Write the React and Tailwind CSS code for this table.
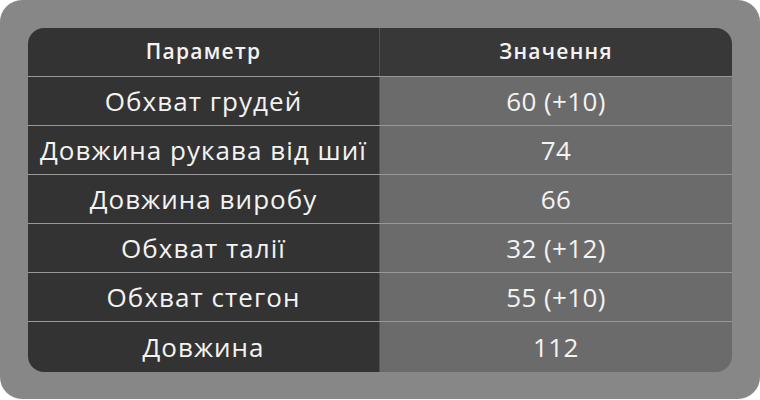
import React from "react";

const rows = [
  ["Обхват грудей", "60 (+10)"],
  ["Довжина рукава від шиї", "74"],
  ["Довжина виробу", "66"],
  ["Обхват талії", "32 (+12)"],
  ["Обхват стегон", "55 (+10)"],
  ["Довжина", "112"],
];

export default function App() {
  return (
    <div className="w-[760px] h-[400px] bg-white" style={{ fontFamily: '"Open Sans", "Noto Sans", sans-serif' }}>
      <div className="w-[760px] h-[399px] rounded-[22px] bg-[#878787] pt-[28px] px-[28px]">
        <div className="w-[704px] h-[344px] rounded-[16px] overflow-hidden flex flex-col text-[#f3f3f3]">
          <div className="flex h-[49px] border-b border-white/15">
            <div className="w-[352px] bg-[#333333] border-r border-white/15 flex items-center justify-center text-[21px] font-semibold tracking-[0.06em]">
              Параметр
            </div>
            <div className="flex-1 bg-[#383838] flex items-center justify-center text-[21px] font-semibold tracking-[0.06em]">
              Значення
            </div>
          </div>
          {rows.map(([a, b], i) => (
            <div
              key={i}
              className={i < rows.length - 1 ? "flex h-[49px] border-b border-white/15" : "flex flex-1"}
            >
              <div className="w-[352px] bg-[#333333] border-r border-white/15 flex items-center justify-center text-[26px] tracking-[0.04em]">
                {a}
              </div>
              <div className="flex-1 bg-[#6b6b6b] flex items-center justify-center text-[26px] tracking-[0.015em]">
                {b}
              </div>
            </div>
          ))}
        </div>
      </div>
    </div>
  );
}
